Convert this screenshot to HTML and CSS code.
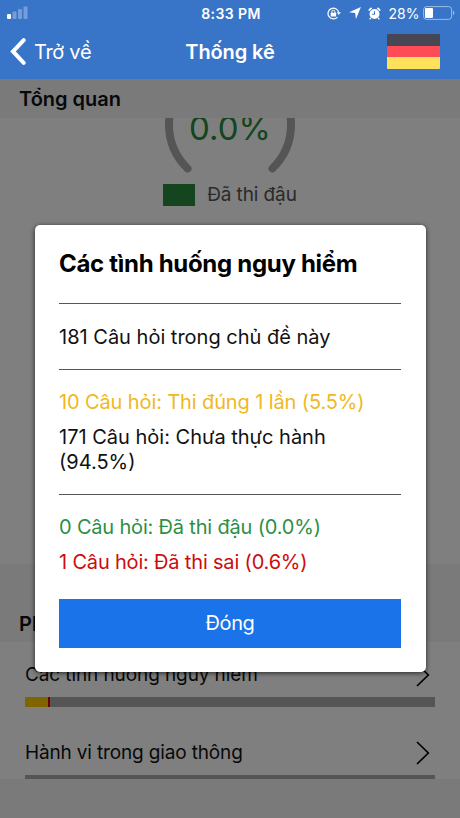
FILE: index.html
```
<!DOCTYPE html>
<html lang="vi">
<head>
    <meta charset="UTF-8">
    <meta name="viewport" content="width=device-width, initial-scale=1.0">
    <title>Thống kê</title>
    <link rel="stylesheet" href="styles.css">
</head>
<body>
    <header class="header">
        <div class="status-bar">
            <svg class="signal" width="21" height="13" viewBox="0 0 21 13" fill="#fff">
                <rect x="0" y="8" width="4" height="5" rx="1"/>
                <rect x="5.5" y="5.5" width="4" height="7.5" rx="1" opacity=".3"/>
                <rect x="11" y="3" width="4" height="10" rx="1" opacity=".3"/>
                <rect x="16.5" y="0.5" width="4" height="12.5" rx="1" opacity=".3"/>
            </svg>
            <span class="clock">8:33 PM</span>
            <div class="status-icons">
                <svg width="14" height="13" viewBox="0 0 14 13" fill="none" stroke="#fff">
                    <path d="M10.4 10.2A5.4 5.4 0 1 1 11.7 5.4" stroke-width="1.2"/>
                    <path d="M9.8 5.3h4l-2 2.8z" fill="#fff" stroke="none"/>
                    <rect x="3.7" y="5.7" width="5.4" height="3.9" rx=".5" fill="#fff" stroke="none"/>
                    <path d="M4.9 6V4.7a1.5 1.5 0 0 1 3 0V6" stroke-width="1"/>
                </svg>
                <svg width="12" height="12" viewBox="0 0 12 12" fill="#fff">
                    <path d="M11.9.1 7 11.9 6.1 6 .1 5.2z"/>
                </svg>
                <svg width="13" height="13" viewBox="0 0 13 13" fill="none" stroke="#fff">
                    <circle cx="6.5" cy="7" r="5" fill="#fff" stroke="none"/>
                    <path d="M.9 3.6A7 7 0 0 1 3.7 1M9.3 1a7 7 0 0 1 2.8 2.6" stroke-width="1.7"/>
                    <path d="M2.8 10.8 1.7 12.3M10.2 10.8l1.1 1.5" stroke-width="1.4"/>
                    <path d="M6.5 4.2v3.1H4.2" stroke="#3875c9"/>
                </svg>
                <span class="percent">28%</span>
                <svg width="32" height="14" viewBox="0 0 32 14" fill="none">
                    <rect x=".6" y=".6" width="28" height="12.8" rx="3" stroke="#fff" stroke-opacity=".5"/>
                    <rect x="2" y="2" width="8" height="10" rx="1" fill="#fff"/>
                    <path d="M30 4.8q1.4.6 1.4 2.2T30 9.2z" fill="#fff" fill-opacity=".5"/>
                </svg>
            </div>
        </div>
        <div class="nav-bar">
            <a class="back">
                <svg width="16" height="27" viewBox="0 0 16 27" fill="none" stroke="#fff" stroke-width="4">
                    <path d="M13.7 2.2 3 13.5l10.7 11.3" stroke-linecap="round"/>
                </svg>
                <span>Trở về</span>
            </a>
            <h1>Thống kê</h1>
            <div class="flag"><i></i><i></i><i></i></div>
        </div>
    </header>

    <main class="content">
        <h2 class="section-title overview-title">Tổng quan</h2>
        <section class="overview">
            <div class="gauge">
                <svg width="130" height="130" viewBox="0 0 130 130" fill="none" stroke="#aaa" stroke-width="8" stroke-linecap="round">
                    <path d="M22.5 108.5A61 61 0 1 1 107.5 108.5"/>
                </svg>
                <span class="gauge-value">0.0%</span>
            </div>
            <div class="legend"><i></i><span>Đã thi đậu</span></div>
        </section>
        <h2 class="section-title topics-title">Phân tích</h2>
        <section class="topics">
            <div class="topic">
                <div class="topic-name">
                    <span>Các tình huống nguy hiểm</span>
                    <svg width="14" height="24" viewBox="0 0 14 24" fill="none" stroke="#000" stroke-width="1.7"><path d="M1 1l11.3 11L1 23"/></svg>
                </div>
                <div class="bar">
                    <div class="bar-passed" style="width: 5.5%"></div>
                    <div class="bar-failed" style="width: 0.6%"></div>
                </div>
            </div>
            <div class="topic">
                <div class="topic-name">
                    <span>Hành vi trong giao thông</span>
                    <svg width="14" height="24" viewBox="0 0 14 24" fill="none" stroke="#000" stroke-width="1.7"><path d="M1 1l11.3 11L1 23"/></svg>
                </div>
                <div class="bar"></div>
            </div>
        </section>
    </main>

    <div class="overlay">
        <div class="modal">
            <h3>Các tình huống nguy hiểm</h3>
            <hr>
            <p class="total">181 Câu hỏi trong chủ đề này</p>
            <hr>
            <p class="once">10 Câu hỏi: Thi đúng 1 lần (5.5%)</p>
            <p class="untrained">171 Câu hỏi: Chưa thực hành (94.5%)</p>
            <hr>
            <p class="passed">0 Câu hỏi: Đã thi đậu (0.0%)</p>
            <p class="failed">1 Câu hỏi: Đã thi sai (0.6%)</p>
            <button>Đóng</button>
        </div>
    </div>
</body>
</html>
```
FILE: styles.css
```
* {
    box-sizing: border-box;
}
body {
    margin: 0;
    height: 818px;
    display: flex;
    flex-direction: column;
    overflow: hidden;
    font-family: Inter, "Liberation Sans", sans-serif;
    font-size: 20px;
    color: #111;
    background-color: #f4f4f4;
}
svg {
    display: block;
    flex: none;
}
h1, h2, h3, p {
    margin: 0;
}
.header {
    height: 79px;
    flex: none;
    background-color: #3875c9;
    color: #fff;
}
.status-bar {
    height: 26px;
    display: grid;
    grid-template-columns: 1fr auto 1fr;
    align-items: center;
    padding: 0 5px 0 7px;
}
.signal {
    margin-top: -1px;
}
.clock {
    font-size: 14px;
    font-weight: 600;
    letter-spacing: 0.4px;
}
.status-icons {
    display: flex;
    align-items: center;
    justify-content: flex-end;
    gap: 7.5px;
}
.percent {
    font-size: 14px;
    margin-right: -4px;
}
.nav-bar {
    height: 53px;
    display: grid;
    grid-template-columns: 1fr auto 1fr;
    align-items: center;
    padding: 0 20px 2px 10px;
}
.back {
    display: flex;
    align-items: center;
    gap: 8px;
    letter-spacing: -0.3px;
}
.nav-bar h1 {
    margin: 0 -5px 0 5px;
    font-size: 20px;
    font-weight: 600;
    letter-spacing: -0.1px;
}
.flag {
    justify-self: end;
    width: 53px;
    height: 35px;
    display: flex;
    flex-direction: column;
    border-radius: 1px;
    overflow: hidden;
}
.flag i {
    flex: 1;
    background-color: #464655;
}
.flag i:nth-child(2) {
    background-color: #ff4b55;
}
.flag i:nth-child(3) {
    background-color: #ffe15a;
}
.content {
    flex: 1;
}
.section-title {
    padding-left: 19px;
    font-size: 20px;
    font-weight: 600;
    background-color: #f4f4f4;
}
.overview-title {
    height: 39px;
    line-height: 41px;
}
.overview {
    height: 446px;
    overflow: hidden;
    background-color: #fff;
    display: flex;
    flex-direction: column;
    align-items: center;
}
.gauge {
    display: grid;
    place-items: center;
    margin-top: -58px;
}
.gauge > * {
    grid-area: 1 / 1;
}
.gauge-value {
    font-size: 33px;
    color: #2a8a3c;
    margin-top: 6px;
}
.legend {
    display: flex;
    align-items: center;
    gap: 12px;
    margin-top: -7px;
    font-size: 19px;
    letter-spacing: -0.1px;
    color: #555;
}
.legend i {
    width: 32px;
    height: 22px;
    background-color: #2a8a3c;
}
.topics-title {
    height: 78px;
    padding-top: 20px;
    line-height: 80px;
}
.topics {
    height: 137px;
    padding: 0 25px;
    overflow: hidden;
    background-color: #fff;
}
.topic {
    height: 78px;
    padding-top: 20px;
}
.topic-name {
    height: 25px;
    margin-bottom: 10px;
    padding-right: 5px;
    display: flex;
    align-items: center;
    justify-content: space-between;
    font-size: 19px;
    letter-spacing: -0.1px;
}
.topic:last-child .topic-name {
    letter-spacing: -0.15px;
}
.bar {
    height: 10px;
    display: flex;
    background-color: #aaa;
}
.bar-passed {
    background-color: #ffc800;
}
.bar-failed {
    background-color: #e00000;
}
.overlay {
    position: absolute;
    inset: 79px 0 0;
    display: flex;
    justify-content: center;
    align-items: center;
    background-color: rgba(0, 0, 0, 0.5);
}
.modal {
    width: 391px;
    height: 447px;
    padding: 24px 24.5px;
    border-radius: 5px;
    background-color: #fff;
    box-shadow: 0 1px 5px rgba(0, 0, 0, 0.7);
    line-height: 25px;
}
.modal h3 {
    font-size: 24px;
    font-weight: 700;
    line-height: 30px;
    letter-spacing: -0.3px;
    color: #000;
}
.modal hr {
    height: 1px;
    margin: 20px 0;
    border: none;
    background-color: #555;
}
.modal h3 + hr {
    margin-top: 24px;
}
.modal .total {
    margin: 21px 0 -1px;
}
.modal .once {
    margin-bottom: 10px;
    letter-spacing: -0.12px;
    color: #f0b823;
}
.modal .untrained {
    margin-bottom: -1px;
}
.modal .passed,
.modal .failed {
    letter-spacing: -0.18px;
}
.modal .passed {
    margin-bottom: 10px;
    color: #2d8f45;
}
.modal .failed {
    color: #cc0c0c;
}
.modal button {
    display: block;
    width: 100%;
    height: 49px;
    margin-top: 24px;
    border: none;
    background-color: #1a73e8;
    color: #fff;
    font: inherit;
    letter-spacing: -0.4px;
}
```
